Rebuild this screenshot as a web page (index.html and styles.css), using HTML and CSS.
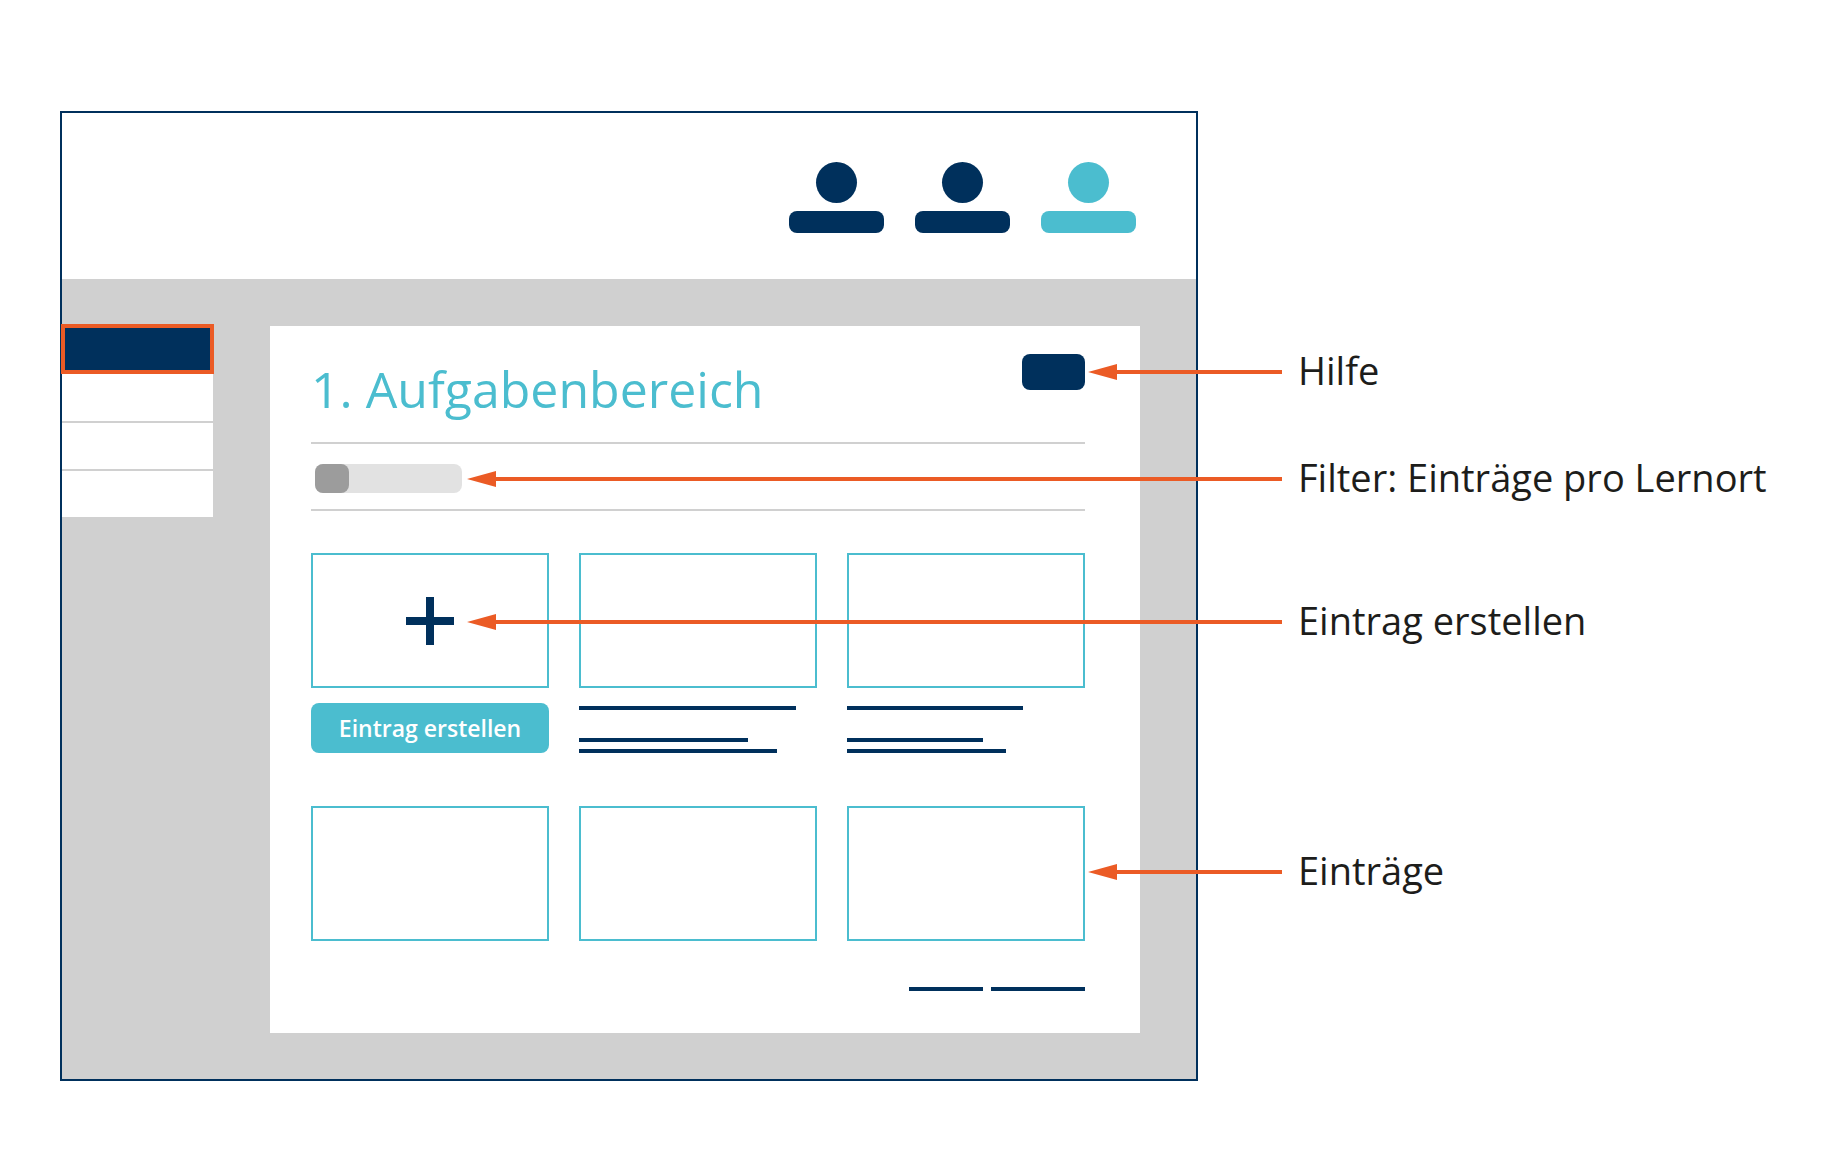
FILE: index.html
```html
<!DOCTYPE html>
<html lang="de">
<head>
<meta charset="utf-8">
<meta name="viewport" content="width=device-width, initial-scale=1">
<title>Aufgabenbereich</title>
<link rel="stylesheet" href="styles.css">
</head>
<body>
<main class="diagram">
  <div class="frame">
    <header class="topbar">
      <button class="user" type="button" aria-label="Person 1"><span class="user-head"></span><span class="user-name"></span></button>
      <button class="user" type="button" aria-label="Person 2"><span class="user-head"></span><span class="user-name"></span></button>
      <button class="user user-active" type="button" aria-label="Person 3"><span class="user-head"></span><span class="user-name"></span></button>
    </header>
    <div class="workspace">
      <nav class="sidebar" aria-label="Bereiche">
        <a class="nav-item nav-active" href="#b1" aria-label="Bereich 1"></a>
        <a class="nav-item" href="#b2" aria-label="Bereich 2"></a>
        <a class="nav-item" href="#b3" aria-label="Bereich 3"></a>
        <a class="nav-item" href="#b4" aria-label="Bereich 4"></a>
      </nav>
      <section class="panel">
        <div class="panel-head">
          <h1 class="title">1. Aufgabenbereich</h1>
          <button class="help" type="button" aria-label="Hilfe"></button>
        </div>
        <div class="filter-row">
          <input class="filter" type="range" min="0" max="3" value="0" aria-label="Filter">
        </div>
        <div class="entries">
          <article class="entry">
            <button class="tile" type="button" aria-label="Neu">
              <svg width="48" height="48" viewBox="0 0 48 48" aria-hidden="true"><path d="M24 0V48M0 24H48" stroke="#00305c" stroke-width="8"/></svg>
            </button>
            <button class="create" type="button">Eintrag erstellen</button>
          </article>
          <article class="entry">
            <div class="tile"></div>
            <div class="lines lines-long"><span class="line"></span><span class="line"></span><span class="line"></span></div>
          </article>
          <article class="entry">
            <div class="tile"></div>
            <div class="lines lines-short"><span class="line"></span><span class="line"></span><span class="line"></span></div>
          </article>
          <article class="entry"><div class="tile"></div></article>
          <article class="entry"><div class="tile"></div></article>
          <article class="entry"><div class="tile"></div></article>
        </div>
        <footer class="pager">
          <a class="page-prev" href="#zurueck" aria-label="Zurück"></a>
          <a class="page-next" href="#weiter" aria-label="Weiter"></a>
        </footer>
      </section>
    </div>
  </div>

  <div class="callout callout-help">
    <svg class="arrow-head" viewBox="0 0 29 16" aria-hidden="true"><path d="M0 8L29 0V16Z"/></svg>
    <span class="arrow-line"></span><span class="callout-text">Hilfe</span>
  </div>
  <div class="callout callout-filter">
    <svg class="arrow-head" viewBox="0 0 29 16" aria-hidden="true"><path d="M0 8L29 0V16Z"/></svg>
    <span class="arrow-line"></span><span class="callout-text">Filter: Einträge pro Lernort</span>
  </div>
  <div class="callout callout-create">
    <svg class="arrow-head" viewBox="0 0 29 16" aria-hidden="true"><path d="M0 8L29 0V16Z"/></svg>
    <span class="arrow-line"></span><span class="callout-text">Eintrag erstellen</span>
  </div>
  <div class="callout callout-entries">
    <svg class="arrow-head" viewBox="0 0 29 16" aria-hidden="true"><path d="M0 8L29 0V16Z"/></svg>
    <span class="arrow-line"></span><span class="callout-text">Einträge</span>
  </div>
</main>
</body>
</html>
```

FILE: styles.css
```css
:root {
  --navy: #00305c;
  --teal: #4bbdcf;
  --orange: #eb5b25;
  --grey: #d0d0d0;
  --notes: 649px;
}

* { box-sizing: border-box; }

body {
  margin: 0;
  background: #fff;
  color: #1d1d1b;
  font-family: "Open Sans", "Noto Sans", sans-serif;
}

button {
  margin: 0;
  padding: 0;
  border: 0;
  background: none;
  font: inherit;
  cursor: pointer;
}

.diagram {
  position: relative;
  padding: 111px var(--notes) 90px 60px;
}

.frame { border: 2px solid var(--navy); }

/* Top bar */
.topbar {
  display: flex;
  justify-content: flex-end;
  gap: 31px;
  padding: 49px 60px 46px;
}

.user {
  display: flex;
  flex-direction: column;
  align-items: center;
  gap: 8px;
  width: 95px;
  color: var(--navy);
}

.user-active { color: var(--teal); }

.user-head {
  width: 41px;
  height: 41px;
  border-radius: 50%;
  background: currentColor;
}

.user-name {
  width: 100%;
  height: 22px;
  border-radius: 8px;
  background: currentColor;
}

/* Workspace */
.workspace {
  display: flex;
  align-items: flex-start;
  gap: 57px;
  padding: 46px 56px 46px 0;
  background: var(--grey);
}

.sidebar {
  display: flex;
  flex-direction: column;
  flex: 0 0 151px;
}

.nav-item {
  height: 48px;
  background: #fff;
}

.nav-item + .nav-item + .nav-item { border-top: 2px solid var(--grey); }

.nav-active {
  position: relative;
  background: var(--navy);
  outline: 4px solid var(--orange);
  outline-offset: -3px;
}

.panel {
  flex: 1;
  min-width: 0;
  margin-top: 1px;
  padding: 28px 55px 42px 41px;
  background: #fff;
}

.panel-head {
  display: flex;
  justify-content: space-between;
  align-items: flex-start;
  padding-bottom: 18px;
  border-bottom: 2px solid var(--grey);
}

.title {
  margin: 0;
  color: var(--teal);
  font-size: 50px;
  font-weight: 400;
  line-height: 70px;
}

.help {
  width: 63px;
  height: 36px;
  border-radius: 8px;
  background: var(--navy);
}

.filter-row {
  display: flex;
  padding: 20px 4px 16px;
  border-bottom: 2px solid var(--grey);
}

.filter {
  appearance: none;
  width: 147px;
  height: 29px;
  margin: 0;
  border-radius: 8px;
  background: #e2e2e2;
}

.filter::-webkit-slider-thumb {
  appearance: none;
  width: 34px;
  height: 29px;
  border-radius: 8px;
  background: #9c9c9c;
}

.entries {
  display: grid;
  grid-template-columns: repeat(3, 1fr);
  gap: 53px 30px;
  padding-top: 42px;
}

.entry {
  display: flex;
  flex-direction: column;
  gap: 15px;
}

.tile {
  display: flex;
  align-items: center;
  justify-content: center;
  height: 135px;
  border: 2px solid var(--teal);
}

.create {
  height: 50px;
  border-radius: 8px;
  background: var(--teal);
  color: #fff;
  font-size: 23px;
  font-weight: 600;
}

.lines {
  display: flex;
  flex-direction: column;
  gap: 7px;
  padding-top: 3px;
}

.line {
  height: 4px;
  background: var(--navy);
}

.line:first-child { margin-bottom: 21px; }

.lines-long .line:nth-child(1) { width: 91%; }
.lines-long .line:nth-child(2) { width: 71%; }
.lines-long .line:nth-child(3) { width: 83%; }
.lines-short .line:nth-child(1) { width: 74%; }
.lines-short .line:nth-child(2) { width: 57%; }
.lines-short .line:nth-child(3) { width: 67%; }

.pager {
  display: flex;
  justify-content: flex-end;
  gap: 8px;
  padding-top: 46px;
}

.page-prev,
.page-next {
  height: 4px;
  background: var(--navy);
}

.page-prev { width: 74px; }
.page-next { width: 94px; }

/* Callouts drawn over the frame */
.callout {
  position: absolute;
  right: 0;
  display: flex;
  align-items: center;
  height: 50px;
  pointer-events: none;
}

.callout-help { top: 347px; left: calc(100% - var(--notes) - 110px); }
.callout-filter { top: 454px; left: 467px; }
.callout-create { top: 597px; left: 467px; }
.callout-entries { top: 847px; left: calc(100% - var(--notes) - 110px); }

.arrow-head {
  flex: none;
  width: 29px;
  height: 16px;
  fill: var(--orange);
}

.arrow-line {
  flex: 1;
  height: 4px;
  background: var(--orange);
}

.callout-text {
  flex: 0 0 565px;
  padding: 0 0 4px 16px;
  font-size: 38px;
  line-height: 52px;
  white-space: nowrap;
}
```
